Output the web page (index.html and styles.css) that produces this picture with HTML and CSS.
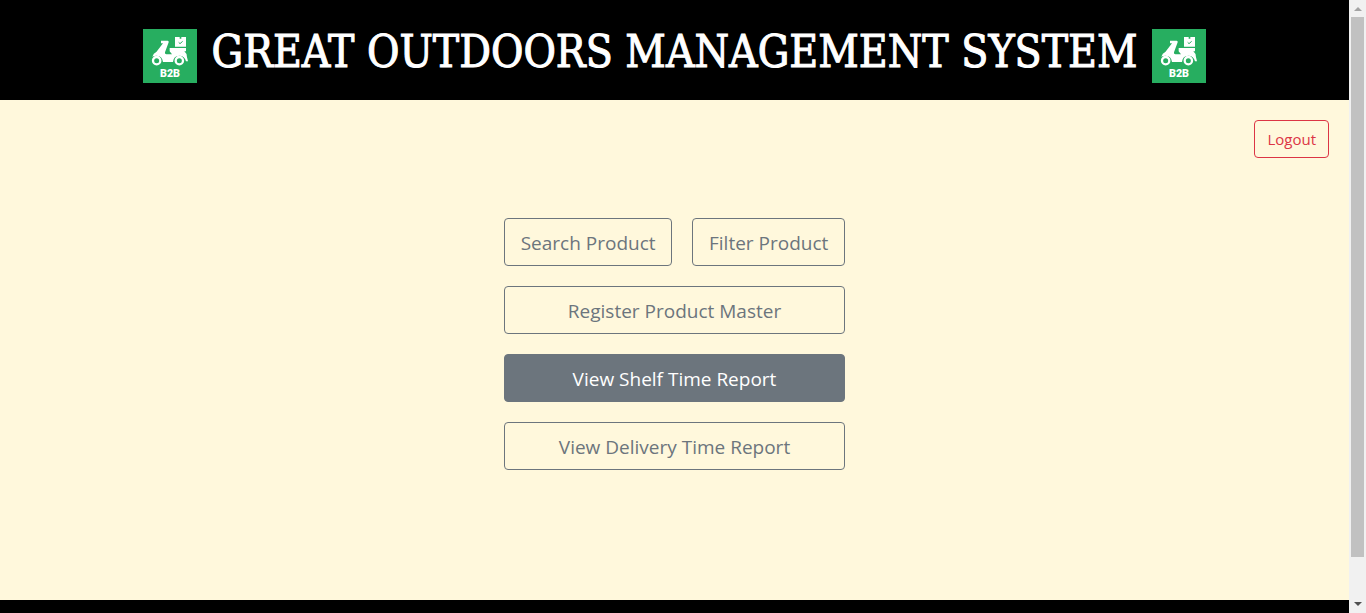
FILE: index.html
```html
<!DOCTYPE html>
<html lang="en">
<head>
<meta charset="utf-8">
<title>Great Outdoors Management System</title>
<link rel="stylesheet" href="styles.css">
</head>
<body>
<div class="window">
  <div class="page">
    <header class="banner">
      <svg class="logo" viewBox="0 0 162 162" role="img" aria-label="B2B">
        <rect width="162" height="162" fill="#27ae60"/>
        <g fill="none" stroke="#fff" stroke-width="7">
          <circle cx="41" cy="95" r="11"/>
          <circle cx="109" cy="95" r="11"/>
        </g>
        <path fill="#fff" d="M54 35h20q4 0 3 5L66 70q-1 6 4 6h17l-7-9V57h49v10h-5q8 6 8 18l3 12h-6q-4-17-20-17-17 0-19 19H60q-3-19-19-19-8 0-13 3 3-10 12-14L60 43h-6z"/>
        <path fill="#fff" d="M96 24h14v5h5v-5h14v29H96z"/>
        <path fill="none" stroke="#27ae60" stroke-width="3" d="M107 40l4 4 8-7"/>
        <text class="logo-text" x="81" y="144" text-anchor="middle">B2B</text>
      </svg>
      <h1 class="title">GREAT OUTDOORS MANAGEMENT SYSTEM</h1>
      <svg class="logo" viewBox="0 0 162 162" role="img" aria-label="B2B">
        <rect width="162" height="162" fill="#27ae60"/>
        <g fill="none" stroke="#fff" stroke-width="7">
          <circle cx="41" cy="95" r="11"/>
          <circle cx="109" cy="95" r="11"/>
        </g>
        <path fill="#fff" d="M54 35h20q4 0 3 5L66 70q-1 6 4 6h17l-7-9V57h49v10h-5q8 6 8 18l3 12h-6q-4-17-20-17-17 0-19 19H60q-3-19-19-19-8 0-13 3 3-10 12-14L60 43h-6z"/>
        <path fill="#fff" d="M96 24h14v5h5v-5h14v29H96z"/>
        <path fill="none" stroke="#27ae60" stroke-width="3" d="M107 40l4 4 8-7"/>
        <text class="logo-text" x="81" y="144" text-anchor="middle">B2B</text>
      </svg>
    </header>
    <main class="content">
      <button class="btn btn-danger" type="button">Logout</button>
      <nav class="menu">
        <div class="menu-row">
          <button class="btn btn-large" type="button">Search Product</button>
          <button class="btn btn-large" type="button">Filter Product</button>
        </div>
        <button class="btn btn-large" type="button">Register Product Master</button>
        <button class="btn btn-large btn-active" type="button">View Shelf Time Report</button>
        <button class="btn btn-large" type="button">View Delivery Time Report</button>
      </nav>
    </main>
    <footer class="footer"></footer>
  </div>
  <div class="scrollbar" aria-hidden="true">
    <svg class="arrow" viewBox="0 0 17 17"><path fill="#a3a3a3" d="M5 11l4-4 4 4z"/></svg>
    <div class="track"><div class="thumb"></div></div>
    <svg class="arrow" viewBox="0 0 17 17"><path fill="#505050" d="M5 6l4 4 4-4z"/></svg>
  </div>
</div>
</body>
</html>
```
FILE: styles.css
```css
* { box-sizing: border-box; }
body { margin: 0; font-family: "Segoe UI", "Open Sans", "Noto Sans", sans-serif; }
.window { display: flex; height: 100vh; overflow: hidden; }
.page { flex: 1; display: flex; flex-direction: column; background: #000; }
.banner { display: flex; align-items: center; justify-content: center; gap: 15px; height: 100px; padding-top: 12px; background: #000; }
.logo { width: 54px; height: 54px; flex: none; }
.logo-text { font: 900 32px Roboto, sans-serif; fill: #fff; }
.title { margin: 0; padding-bottom: 8px; color: #fff; font: 400 44px/56px "DejaVu Serif Condensed", "DejaVu Serif", serif; -webkit-text-stroke: 1px #fff; white-space: nowrap; }
.content { display: flex; flex-direction: column; height: 500px; padding: 20px; background: #fff8dc; }
.btn { padding: 6px 12px; border: 1px solid #6c757d; border-radius: 4px; background: transparent; color: #6c757d; font: 400 15px/24px "Open Sans", "Noto Sans", sans-serif; }
.btn-danger { align-self: flex-end; border-color: #dc3545; color: #dc3545; }
.menu { display: flex; flex-direction: column; gap: 20px; align-self: center; margin-top: 60px; width: 341px; }
.menu-row { display: flex; gap: 20px; }
.btn-large { padding: 9px 16px 7px; font-size: 19px; line-height: 30px; white-space: nowrap; }
.menu-row .btn { flex: auto; padding-left: 15px; padding-right: 15px; }
.btn-active { background: #6c757d; color: #fff; }
.footer { flex: 1; background: #000; }
.scrollbar { display: flex; flex-direction: column; flex: none; width: 17px; background: #f1f1f1; }
.arrow { width: 17px; height: 17px; flex: none; }
.track { flex: 1; padding: 0 2px; }
.thumb { height: 540px; max-height: 100%; background: #c1c1c1; }
```
